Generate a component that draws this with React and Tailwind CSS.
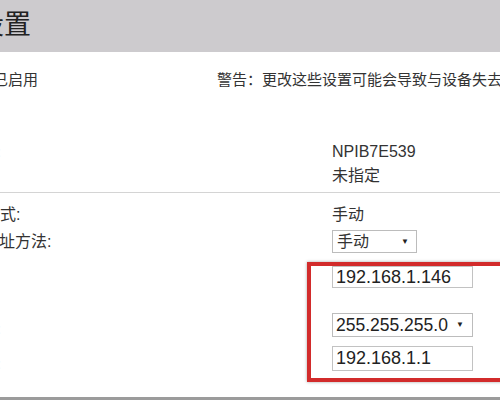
/* Network settings page (cropped view) */

function SelectBox({ value, className }) {
  return (
    <div className={`flex items-center justify-between border border-[#bcbcbc] bg-white ${className}`}>
      <span>{value}</span>
      <span className="text-[8px] leading-none text-[#222]">▼</span>
    </div>
  )
}

function TextBox({ value, className }) {
  return (
    <div className={`flex items-center border border-[#c2c2c2] bg-white pl-[3px] text-[18px] text-[#222] ${className}`}>
      {value}
    </div>
  )
}

export default function App() {
  return (
    <div className="w-[500px] h-[400px] overflow-hidden bg-white text-[#333] font-['Liberation_Sans','Noto_Sans_CJK_SC',sans-serif]">
      <header className="h-[52px] bg-[#cdcbce] flex items-center overflow-hidden">
        <h1 className="-ml-[23px] pb-[2px] text-[27px] leading-none text-[#222] whitespace-nowrap">设置</h1>
      </header>

      <div className="mt-[18px] h-[20px] flex items-center text-[15px] leading-[20px] whitespace-nowrap overflow-hidden">
        <span className="-ml-[7px] w-[224px] shrink-0">已启用</span>
        <span>警告：更改这些设置可能会导致与设备失去连接。</span>
      </div>

      <div className="mt-[50px]">
        <div className="h-[24px] flex items-center">
          <div className="w-[332px] shrink-0">
            <span className="-ml-[3px] text-[15px] text-[#e4e4e4]">:</span>
          </div>
          <span className="text-[16px]">NPIB7E539</span>
        </div>
        <div className="h-[24px] flex items-center">
          <div className="w-[332px] shrink-0" />
          <span className="text-[16px]">未指定</span>
        </div>
      </div>

      <div className="mt-[4px] h-px bg-[#d4d4d4]" />

      <div className="mt-[10px] h-[24px] flex items-center text-[16px] whitespace-nowrap">
        <div className="w-[332px] shrink-0">
          <span className="-ml-[16px] inline-block">方式:</span>
        </div>
        <span>手动</span>
      </div>

      <div className="mt-[3px] h-[23px] flex items-center text-[16px] whitespace-nowrap">
        <div className="w-[332px] shrink-0">
          <span className="-ml-[17px] inline-block">地址方法:</span>
        </div>
        <SelectBox value="手动" className="w-[85px] h-[23px] pl-[4px] pr-[7px]" />
      </div>

      <div className="mt-[9px] flex">
        <div className="w-[307px] shrink-0 h-[120px] flex flex-col text-[15px] text-[#e6e6e6]">
          <span className="mt-[56px] -ml-[3px]">:</span>
          <span className="mt-[12px] -ml-[3px]">:</span>
        </div>
        <div className="w-[200px] h-[120px] shrink-0 border-[4px] border-[#d22b2b] pl-[21px] shadow-[0_0_3px_rgba(0,0,0,0.35)]">
          <TextBox value="192.168.1.146" className="w-[141px] h-[22px]" />
          <SelectBox value="255.255.255.0" className="mt-[25px] w-[141px] h-[24px] pl-[3px] pr-[8px] text-[17.5px] text-[#222]" />
          <TextBox value="192.168.1.1" className="mt-[9px] w-[141px] h-[25px]" />
        </div>
      </div>

      <div className="mt-[15px] h-[3px] bg-[#9b9b9b]" />
    </div>
  )
}
